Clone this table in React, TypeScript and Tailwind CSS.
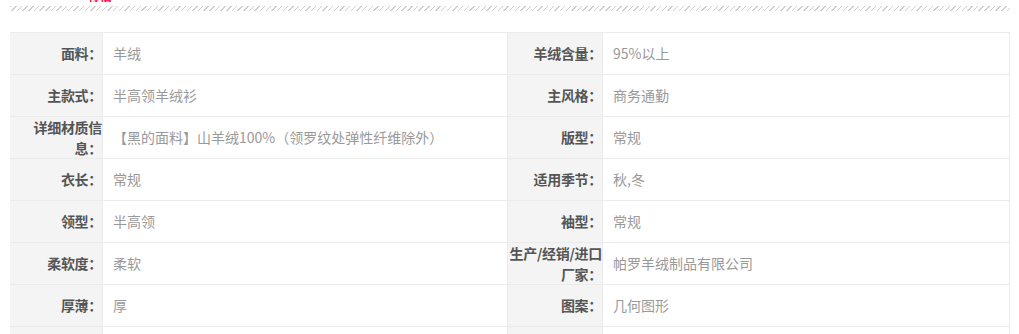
const rows: [string, string, string, string][] = [
  ["面料：", "羊绒", "羊绒含量：", "95%以上"],
  ["主款式：", "半高领羊绒衫", "主风格：", "商务通勤"],
  ["详细材质信\n息：", "【黑的面料】山羊绒100%（领罗纹处弹性纤维除外）", "版型：", "常规"],
  ["衣长：", "常规", "适用季节：", "秋,冬"],
  ["领型：", "半高领", "袖型：", "常规"],
  ["柔软度：", "柔软", "生产/经销/进口\n厂家：", "帕罗羊绒制品有限公司"],
  ["厚薄：", "厚", "图案：", "几何图形"],
  ["", "", "", ""],
];

function Label({ text, w }: { text: string; w: string }) {
  return (
    <div
      className={`${w} shrink-0 bg-[#f4f4f4] border-r border-[#ebebeb] flex items-center justify-end text-right pr-0 font-bold text-[#555] leading-[21px] whitespace-pre tracking-[-0.3px]`}
    >
      <span>{text}</span>
    </div>
  );
}

function Value({ text, w }: { text: string; w: string }) {
  return (
    <div className={`${w} border-r border-[#ebebeb] flex items-center pl-[10px] text-[#999]`}>
      {text}
    </div>
  );
}

export default function App() {
  return (
    <div
      className="w-[1019px] h-[334px] overflow-hidden bg-white text-[14px]"
      style={{ fontFamily: '"Noto Sans CJK SC", "Noto Sans", sans-serif' }}
    >
      <div className="h-[2px] overflow-hidden pl-[88px] flex items-end">
        <span className="text-[12px] leading-[12px] mb-[-4px] font-bold text-[#ff0036]">详情</span>
      </div>
      <div className="h-[4px]" />
      <div className="ml-[10px] w-[1000px] h-[5px] bg-[repeating-linear-gradient(135deg,#cfcfcf_0,#cfcfcf_1px,transparent_1px,transparent_4px)]" />
      <div className="h-[21px]" />
      <div className="ml-[10px] w-[1000px] border-t border-[#ebebeb]">
        {rows.map((r, i) => (
          <div key={i} className="flex h-[42px] border-b border-[#ebebeb]">
            <Label text={r[0]} w="w-[93px]" />
            <Value text={r[1]} w="w-[405px]" />
            <Label text={r[2]} w="w-[95px]" />
            <Value text={r[3]} w="flex-1" />
          </div>
        ))}
      </div>
    </div>
  );
}
